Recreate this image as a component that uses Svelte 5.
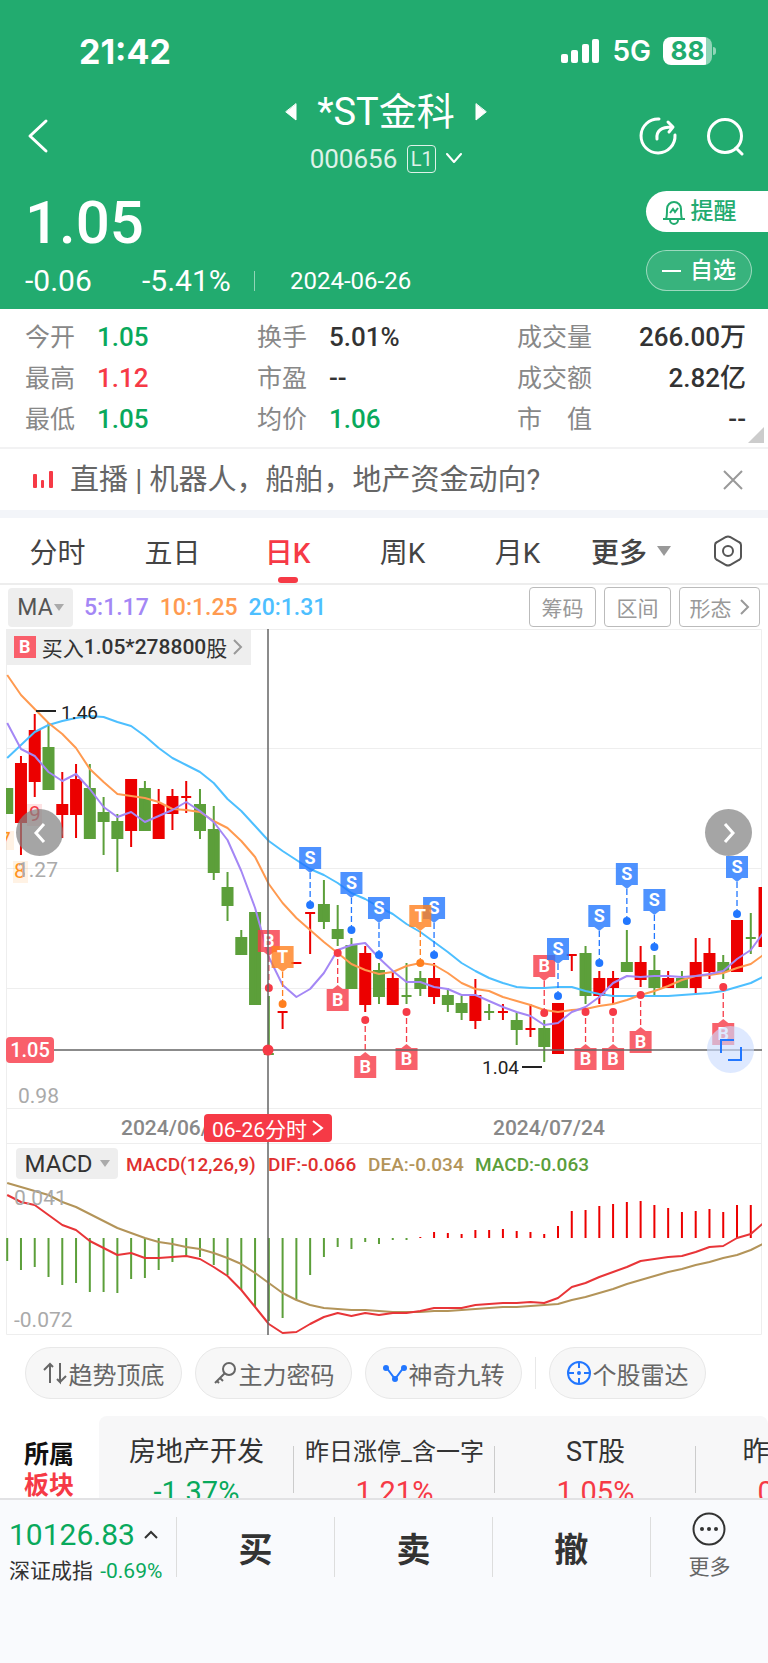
<script>
  // Header quote
  const stats = [
    [
      { label: '今开', value: '1.05', tone: 'down' },
      { label: '最高', value: '1.12', tone: 'up' },
      { label: '最低', value: '1.05', tone: 'down' }
    ],
    [
      { label: '换手', value: '5.01%', tone: '' },
      { label: '市盈', value: '--', tone: '' },
      { label: '均价', value: '1.06', tone: 'down' }
    ],
    [
      { label: '成交量', value: '266.00万', tone: '' },
      { label: '成交额', value: '2.82亿', tone: '' },
      { label: '市　值', value: '--', tone: '' }
    ]
  ]

  const tabs = ['分时', '五日', '日K', '周K', '月K']
  let activeTab = $state('日K')
  let showNews = $state(true)

  const sectors = [
    { name: '房地产开发', value: '-1.37%', tone: 'down' },
    { name: '昨日涨停_含一字', value: '1.21%', tone: 'up', small: true },
    { name: 'ST股', value: '1.05%', tone: 'up' },
    { name: '昨日涨停', value: '0.98%', tone: 'up' }
  ]

  // Chart: one slot per trading day
  const x = (i) => 7.2 + 13.77 * i
  const line = (ys) => ys.map((y, i) => `${x(i).toFixed(1)},${y}`).join(' ')

  // [colour, body top, body bottom, wick top, wick bottom]
  const candles = [
    ['g', 788, 814, 788, 814], ['r', 763, 823, 756, 855], ['r', 730, 782, 714, 797], ['g', 747, 790, 723, 790],
    ['r', 804, 815, 772, 838], ['r', 779, 815, 764, 838], ['g', 788, 839, 764, 839], ['g', 812, 822, 797, 855],
    ['g', 821, 839, 814, 872], ['r', 779, 831, 779, 847], ['g', 788, 831, 781, 831], ['r', 804, 839, 789, 839],
    ['r', 796, 814, 789, 830], ['r', 796, 798, 781, 813], ['g', 804, 831, 789, 839], ['g', 829, 873, 806, 880],
    ['g', 887, 906, 872, 921], ['g', 937, 955, 930, 955], ['g', 912, 1005, 912, 1005], ['g', 1053, 1055, 996, 1055],
    ['r', 1011, 1013, 1011, 1029], ['r', 962, 964, 962, 964], ['r', 912, 914, 912, 954], ['g', 904, 922, 880, 929],
    ['g', 929, 939, 905, 946], ['g', 945, 989, 938, 989], ['r', 953, 1005, 946, 1012], ['g', 970, 997, 963, 1004],
    ['r', 978, 1005, 972, 1005], ['g', 995, 997, 963, 1004], ['g', 978, 989, 971, 996], ['r', 978, 997, 963, 1004],
    ['g', 995, 1005, 988, 1012], ['g', 1003, 1013, 996, 1020], ['r', 995, 1021, 979, 1029], ['g', 1011, 1013, 1004, 1020],
    ['r', 1011, 1013, 1004, 1020], ['g', 1020, 1030, 1012, 1045], ['r', 1028, 1030, 1004, 1037], ['g', 1028, 1047, 1020, 1062],
    ['r', 1003, 1054, 1003, 1054], ['r', 954, 956, 954, 971], ['g', 953, 996, 946, 1004], ['r', 978, 996, 971, 1004],
    ['r', 978, 988, 971, 1004], ['g', 962, 972, 930, 972], ['r', 962, 980, 946, 987], ['g', 970, 988, 955, 995],
    ['r', 978, 988, 971, 988], ['g', 978, 988, 971, 988], ['r', 962, 988, 938, 995], ['r', 953, 972, 938, 979],
    ['g', 962, 972, 955, 979], ['r', 920, 972, 920, 972], ['g', 937, 939, 913, 954], ['r', 887, 947, 887, 947]
  ]

  const ma5 = [
    723, 749, 756, 772, 781, 774, 789, 807, 817, 812, 822, 816, 810, 802, 811, 822, 840, 871, 908, 957,
    985, 997, 989, 973, 950, 945, 943, 958, 971, 982, 982, 987, 989, 995, 995, 1001, 1007, 1012, 1016, 1025,
    1023, 1012, 1007, 997, 983, 976, 977, 976, 976, 977, 976, 974, 971, 959, 950, 931
  ]
  const ma10 = [
    675, 695, 709, 723, 734, 748, 769, 782, 794, 796, 798, 802, 809, 810, 812, 821, 828, 841, 857, 884,
    903, 918, 930, 942, 953, 964, 970, 974, 972, 966, 963, 965, 973, 983, 989, 991, 997, 1001, 1005, 1010,
    1012, 1010, 1009, 1006, 1004, 1000, 995, 991, 986, 980, 976, 975, 973, 968, 964, 954
  ]
  const ma20 = [
    758, 745, 732, 725, 721, 718, 716, 717, 722, 726, 736, 748, 758, 765, 772, 783, 799, 811, 826, 841,
    851, 860, 869, 875, 883, 893, 899, 907, 914, 924, 932, 942, 952, 963, 971, 978, 983, 987, 988, 988,
    987, 987, 991, 994, 996, 996, 996, 996, 996, 995, 994, 993, 991, 987, 983, 976
  ]

  // MACD panel
  const zero = 1238
  const bars = [
    1261, 1270, 1267, 1277, 1285, 1283, 1292, 1292, 1293, 1279, 1278, 1270, 1262, 1256, 1257, 1265, 1275, 1290, 1307, 1321,
    1318, 1300, 1275, 1257, 1247, 1249, 1242, 1244, 1240, 1240, 1237, 1232, 1233, 1234, 1230, 1230, 1229, 1231, 1232, 1234,
    1226, 1211, 1210, 1206, 1204, 1202, 1201, 1205, 1208, 1212, 1211, 1209, 1212, 1205, 1205
  ]
  const dif = [
    1195, 1202, 1205, 1215, 1225, 1230, 1241, 1248, 1255, 1253, 1258, 1258, 1257, 1256, 1259, 1267, 1276, 1290, 1307, 1324,
    1333, 1332, 1324, 1317, 1313, 1316, 1313, 1315, 1313, 1313, 1311, 1308, 1308, 1308, 1305, 1304, 1303, 1303, 1302, 1303,
    1298, 1287, 1283, 1277, 1272, 1267, 1261, 1259, 1257, 1256, 1252, 1247, 1246, 1238, 1234, 1222
  ]
  const dea = [
    1183, 1187, 1191, 1195, 1202, 1207, 1214, 1221, 1228, 1233, 1238, 1242, 1244, 1247, 1249, 1253, 1258, 1264, 1273, 1283,
    1293, 1300, 1305, 1308, 1309, 1310, 1310, 1311, 1312, 1312, 1312, 1311, 1311, 1310, 1309, 1308, 1307, 1307, 1306, 1305,
    1304, 1300, 1297, 1293, 1289, 1284, 1280, 1276, 1272, 1269, 1265, 1262, 1258, 1255, 1250, 1243
  ]

  // Trade marks: day, letter, dot position, whether the flag hangs below the dot
  const marks = [
    { day: 19, type: 'B', dot: 988 }, { day: 20, type: 'T', dot: 1004 }, { day: 22, type: 'S', dot: 905 },
    { day: 24, type: 'B', dot: 953, below: true }, { day: 25, type: 'S', dot: 930 },
    { day: 26, type: 'B', dot: 1020, below: true }, { day: 27, type: 'S', dot: 955 },
    { day: 29, type: 'B', dot: 1012, below: true }, { day: 31, type: 'S', dot: 955 }, { day: 30, type: 'T', dot: 963 },
    { day: 39, type: 'B', dot: 1013 }, { day: 40, type: 'S', dot: 996 },
    { day: 42, type: 'B', dot: 1012, below: true }, { day: 43, type: 'S', dot: 963 },
    { day: 44, type: 'B', dot: 1012, below: true }, { day: 45, type: 'S', dot: 921 },
    { day: 46, type: 'B', dot: 995, below: true }, { day: 47, type: 'S', dot: 947 },
    { day: 52, type: 'B', dot: 987, below: true }, { day: 53, type: 'S', dot: 914 }
  ]
</script>

<div class="app">
  <header class="header">
    <div class="status">
      <span class="clock">21:42</span>
      <span class="signal">
        <svg width="40" height="26" viewBox="0 0 40 26" fill="#fff">
          <rect x="1" y="16" width="7" height="9" rx="2" />
          <rect x="11" y="12" width="7" height="13" rx="2" />
          <rect x="22" y="6" width="7" height="19" rx="2" />
          <rect x="32" y="1" width="7" height="24" rx="2" />
        </svg>
        <span class="net">5G</span>
        <span class="battery">88</span>
      </span>
    </div>

    <div class="nav">
      <button class="icon-btn back" aria-label="返回">
        <svg width="22" height="36" viewBox="0 0 22 36"><path d="M19 3L3 18l16 15" /></svg>
      </button>
      <div class="title-block">
        <div class="title">
          <button class="icon-btn" aria-label="上一只"><svg width="12" height="18" viewBox="0 0 12 18"><path class="solid" d="M11 1v16L1 9z" /></svg></button>
          <h1>*ST金科</h1>
          <button class="icon-btn" aria-label="下一只"><svg width="12" height="18" viewBox="0 0 12 18"><path class="solid" d="M1 1v16l10-8z" /></svg></button>
        </div>
        <div class="code">
          <span>000656</span>
          <span class="level">L1</span>
          <svg width="16" height="12" viewBox="0 0 16 12"><path class="thin" d="M1 1l7 8 7-8" /></svg>
        </div>
      </div>
      <div class="actions">
        <button class="icon-btn" aria-label="分享">
          <svg width="40" height="40" viewBox="0 0 40 40">
            <path d="M21 3A17 17 0 1 0 37 19" />
            <path d="M19 23C18 15 23 11 34 11M30 6l5 5-4 5" />
          </svg>
        </button>
        <button class="icon-btn" aria-label="搜索">
          <svg width="40" height="40" viewBox="0 0 40 40"><circle cx="20" cy="20" r="16.5" /><path d="M31 32l6 6" /></svg>
        </button>
      </div>
    </div>

    <div class="quote">
      <div>
        <div class="price">1.05</div>
        <div class="change">
          <span class="diff">-0.06</span>
          <span class="pct">-5.41%</span>
          <span class="date">2024-06-26</span>
        </div>
      </div>
      <div class="quote-btns">
        <button class="alert">
          <svg width="24" height="26" viewBox="0 0 24 26">
            <path d="M1 20h22M4 20c1-2 1-5 1-10a7 7 0 0 1 14 0c0 5 0 8 1 10M8 21a4 4 0 0 0 8 0M8 14l3-4 2 3 3-4" />
          </svg>
          提醒
        </button>
        <button class="watch"><i></i>自选</button>
      </div>
    </div>
  </header>

  <section class="stats">
    {#each stats as col}
      <dl>
        {#each col as s}
          <div class="stat"><dt>{s.label}</dt><dd class={s.tone}>{s.value}</dd></div>
        {/each}
      </dl>
    {/each}
    <i class="corner"></i>
  </section>

  {#if showNews}
    <section class="news">
      <svg width="22" height="20" viewBox="0 0 22 20" fill="#f63a46">
        <rect x="1" y="4" width="4" height="14" rx="1" /><rect x="9" y="10" width="3" height="8" rx="1" /><rect x="17" y="1" width="4" height="17" rx="1" />
      </svg>
      <a href="#live">直播 | 机器人，船舶，地产资金动向?</a>
      <button class="icon-btn" aria-label="关闭" onclick={() => (showNews = false)}>
        <svg width="20" height="20" viewBox="0 0 20 20"><path class="gray" d="M1 1l18 18M19 1L1 19" /></svg>
      </button>
    </section>
  {/if}

  <nav class="tabs">
    {#each tabs as t}
      <button class="tab" class:active={t === activeTab} onclick={() => (activeTab = t)}>{t}</button>
    {/each}
    <button class="tab more-tab">更多<i class="caret"></i></button>
    <button class="icon-btn settings" aria-label="设置">
      <svg width="32" height="34" viewBox="0 0 32 34">
        <path class="dark" d="M14 3q2-1 4 0l9 5q2 1 2 3v12q0 2-2 3l-9 5q-2 1-4 0l-9-5q-2-1-2-3V11q0-2 2-3z" />
        <circle class="dark" cx="16" cy="17" r="5" />
      </svg>
    </button>
  </nav>

  <div class="ma-row">
    <button class="pick">MA<i class="caret"></i></button>
    <span class="ma5">5:1.17</span>
    <span class="ma10">10:1.25</span>
    <span class="ma20">20:1.31</span>
    <div class="tools">
      <button>筹码</button>
      <button>区间</button>
      <button>形态<svg width="10" height="18" viewBox="0 0 10 18"><path class="gray" d="M1 2l7 7-7 7" /></svg></button>
    </div>
  </div>

  <section class="chart">
    <svg class="plot" viewBox="0 629 768 707">
      <clipPath id="plot-area"><rect x="6" y="629" width="756" height="707" /></clipPath>

      <g class="grid">
        <path d="M6 748.5h756M6 868.5h756M6 988.5h756M6 1108.5h756M6 1143.5h756" />
        <path d="M6.5 629.5h755v705h-755z" />
      </g>

      <g clip-path="url(#plot-area)">
        {#each candles as [color, top, bottom, high, low], i}
          <g class={color}>
            <rect x={x(i) - (bottom - top > 2 ? 6 : 5)} y={top} width={bottom - top > 2 ? 12 : 10} height={bottom - top} />
            <rect x={x(i) - 1} y={high} width="2" height={low - high} />
          </g>
        {/each}
        {#each bars as y, i}
          <rect class={y > zero ? 'g' : 'r'} x={x(i) - 1} y={Math.min(y, zero)} width="2" height={Math.abs(y - zero)} />
        {/each}
        <g class="lines">
          <polyline points={line(ma20)} stroke="#4dbfff" />
          <polyline points={line(ma10)} stroke="#ff9a50" />
          <polyline points={line(ma5)} stroke="#a487f5" />
          <polyline points={line(dea)} stroke="#b39459" />
          <polyline points={line(dif)} stroke="#e83538" />
        </g>

        <!-- nine-turn counters -->
        <g class="nine">
          <rect x="27" y="804" width="15" height="22" fill="#f63a4626" />
          <rect x="0" y="831" width="14" height="19" fill="#ff931e1f" />
          <rect x="13" y="861" width="15" height="22" fill="#ff931e1f" />
          <text x="29" y="821" fill="#f63a46">9</text>
          <text x="-1" y="847" fill="#ff931e">7</text>
          <text x="14" y="878" fill="#ff931e">8</text>
        </g>
      </g>

      <g class="axis">
        <text x="17" y="877">1.27</text>
        <text x="18" y="1103">0.98</text>
        <text x="14" y="1205">0.041</text>
        <text x="14" y="1327">-0.072</text>
      </g>
      <g class="dates">
        <text x="121" y="1135">2024/06/26</text>
        <text x="493" y="1135">2024/07/24</text>
      </g>
      <g class="extreme">
        <path d="M36 711h20M522 1067h20" />
        <text x="61" y="719">1.46</text>
        <text x="482" y="1074">1.04</text>
      </g>

      <g class="legend">
        <text x="126" y="1171" fill="#e0302f">MACD(12,26,9)</text>
        <text x="268" y="1171" fill="#e0302f">DIF:-0.066</text>
        <text x="368" y="1171" fill="#b39459">DEA:-0.034</text>
        <text x="475" y="1171" fill="#5a9e3a">MACD:-0.063</text>
      </g>

      {#each marks as m}
        {@const top = m.below ? m.dot + 36 : m.dot - 58}
        <g class="mark {m.type}">
          <line x1={x(m.day)} x2={x(m.day)} y1={m.below ? m.dot + 6 : top + 26} y2={m.below ? top - 3 : m.dot - 4} />
          <circle cx={x(m.day)} cy={m.dot} r="4" />
          <rect x={x(m.day) - 11} y={top} width="22" height="22" />
          {#if m.below}
            <path d="M{x(m.day) - 5} {top}l5-4 5 4z" />
          {:else}
            <path d="M{x(m.day) - 5} {top + 22}l5 4 5-4z" />
          {/if}
          <text x={x(m.day)} y={top + 17}>{m.type}</text>
        </g>
      {/each}

      <path class="cross" d="M268 629v706M6 1050h756" />
      <circle cx="268" cy="1050" r="5.5" fill="#f63a46" />
    </svg>

    <button class="trade"><b>B</b>买入<span>1.05*278800</span>股<svg width="10" height="18" viewBox="0 0 10 18"><path class="gray" d="M1 2l7 7-7 7" /></svg></button>
    <button class="round prev" aria-label="向左"><svg width="14" height="22" viewBox="0 0 14 22"><path d="M11 2L3 11l8 9" /></svg></button>
    <button class="round next" aria-label="向右"><svg width="14" height="22" viewBox="0 0 14 22"><path d="M3 2l8 9-8 9" /></svg></button>
    <button class="round expand" aria-label="全屏"><svg width="24" height="24" viewBox="0 0 24 24"><path d="M2 15V2h13M22 9v13H9" /></svg></button>
    <span class="price-tag">1.05</span>
    <button class="day-tag">06-26分时<svg width="12" height="18" viewBox="0 0 12 18"><path d="M1 2l9 7-9 7" /></svg></button>
    <button class="pick macd">MACD<i class="caret"></i></button>
  </section>

  <div class="pills">
    <button class="pill">
      <svg width="24" height="24" viewBox="0 0 24 24"><path d="M7 22V3M1 9l6-6 3 3M17 2v19l-3-3M17 21l6-6" /></svg>趋势顶底
    </button>
    <button class="pill">
      <svg width="24" height="24" viewBox="0 0 24 24"><circle cx="16" cy="8" r="6" /><path d="M12 12L2 22M7 17l3 3M4 20l2 2" /></svg>主力密码
    </button>
    <button class="pill blue">
      <svg width="24" height="24" viewBox="0 0 24 24"><path d="M3 6l9 12 9-12" /><circle class="fill" cx="3" cy="7" r="3" /><circle class="fill" cx="21" cy="7" r="3" /><circle class="fill" cx="12" cy="18" r="3" /></svg>神奇九转
    </button>
    <i class="bar"></i>
    <button class="pill blue">
      <svg width="24" height="24" viewBox="0 0 24 24"><circle cx="12" cy="12" r="11" /><path d="M12 1v6M12 17v6M1 12h6M17 12h6" /><circle class="fill" cx="12" cy="12" r="2" /></svg>个股雷达
    </button>
  </div>

  <section class="sectors">
    <h2>所属<em>板块</em></h2>
    <div class="sector-list">
      {#each sectors as s}
        <a class="sector" href="#sector">
          <span class="name" class:small={s.small}>{s.name}</span>
          <span class="value {s.tone}">{s.value}</span>
        </a>
      {/each}
    </div>
  </section>

  <footer class="footer">
    <button class="index">
      <span class="points">10126.83<svg width="16" height="10" viewBox="0 0 16 10"><path d="M2 8l6-6 6 6" /></svg></span>
      <span class="index-name">深证成指 <span class="down">-0.69%</span></span>
    </button>
    <button class="order">买</button>
    <button class="order">卖</button>
    <button class="order">撤</button>
    <button class="more">
      <svg width="34" height="34" viewBox="0 0 34 34">
        <circle cx="17" cy="17" r="15.5" />
        <circle class="dot" cx="10" cy="17" r="2" /><circle class="dot" cx="17" cy="17" r="2" /><circle class="dot" cx="24" cy="17" r="2" />
      </svg>
      更多
    </button>
  </footer>
</div>

<style>
  :global(body) { margin: 0; background: #f9fafd; }

  .app {
    font-family: Roboto, "Noto Sans CJK SC", sans-serif;
    color: #333;
    background: #fff;
    overflow: hidden;
  }
  button {
    font: inherit; color: inherit; background: none; border: none; padding: 0; cursor: pointer;
    display: flex; align-items: center; justify-content: center; box-sizing: border-box; white-space: nowrap;
  }
  a { color: inherit; text-decoration: none; }
  svg { display: block; flex: none; }
  .up { color: #f63a46; }
  .down { color: #09a95c; }
  .caret { border: 7px solid transparent; border-top: 10px solid #999; border-bottom: 0; }
  .gray { fill: none; stroke: #999; stroke-width: 2; }
  .dark { fill: none; stroke: #555; stroke-width: 2; }

  /* header */
  .header { background: #22ab6f; color: #fff; }
  .header .icon-btn path, .header .icon-btn circle, .code path { fill: none; stroke: #fff; stroke-width: 3; stroke-linecap: round; stroke-linejoin: round; }
  .header .icon-btn .solid { fill: #fff; stroke-width: 1; }
  .header .code .thin { stroke-width: 2; }

  .status {
    display: flex; align-items: center; justify-content: space-between;
    height: 70px; padding: 16px 52px 0 79px;
    font-family: Inter, sans-serif;
  }
  .clock { font-size: 34px; font-weight: 700; }
  .signal { display: flex; align-items: center; gap: 12px; }
  .net { font-size: 28px; font-weight: 600; }
  .battery {
    position: relative; width: 49px; height: 28px; line-height: 28px; border-radius: 8px; text-align: center;
    font-size: 26px; font-weight: 700; color: #22ab6f;
    background: linear-gradient(90deg, #fff 88%, #90d5b7 88%);
    margin-right: 4px;
  }
  .battery::after { content: ''; position: absolute; right: -4px; top: 10px; width: 3px; height: 8px; border-radius: 0 3px 3px 0; background: #90d5b7; }

  .nav { display: grid; grid-template-columns: 1fr auto 1fr; height: 100px; padding: 0 23px 0 27px; }
  .back { justify-self: start; }
  .title { display: flex; align-items: center; justify-content: center; gap: 20px; height: 52px; }
  h1 { margin: 0; font-size: 38px; font-weight: 400; line-height: 52px; }
  .code { display: flex; align-items: center; justify-content: center; gap: 10px; font-size: 26px; line-height: 42px; }
  .code span { opacity: 0.85; }
  .level { box-sizing: border-box; width: 29px; height: 28px; border: 1px solid #fff; border-radius: 4px; font-size: 20px; line-height: 26px; text-align: center; }
  .actions { display: flex; justify-content: flex-end; align-items: center; gap: 27px; }

  .quote { display: flex; justify-content: space-between; height: 123px; padding-left: 25px; }
  .price { font-size: 60px; font-weight: 500; line-height: 74px; }
  .change { display: flex; align-items: center; font-size: 30px; line-height: 42px; }
  .diff { width: 117px; }
  .pct { width: 112px; }
  .date { font-size: 24px; border-left: 1px solid #ffffff80; line-height: 20px; padding-left: 35px; }
  .quote-btns { display: flex; flex-direction: column; gap: 18px; padding-top: 5px; width: 122px; font-size: 23px; line-height: 36px; }
  .quote-btns button { height: 41px; }
  .alert { background: #fff; color: #22ab6f; border-radius: 21px 0 0 21px; gap: 5px; padding-right: 16px; font-weight: 500; }
  .alert path { fill: none; stroke: #22ab6f; stroke-width: 2; }
  .watch { width: 106px; border: 1px solid #ffffff80; background: #ffffff1a; border-radius: 21px; gap: 9px; font-weight: 500; }
  .watch i { width: 19px; height: 2px; background: #fff; }

  /* stats */
  .stats { position: relative; display: flex; justify-content: space-between; padding: 8px 22px 7px 25px; border-bottom: 2px solid #f2f2f3; }
  dl { margin: 0; }
  dl:nth-child(1) { width: 232px; }
  dl:nth-child(2) { width: 260px; }
  dl:nth-child(3) { flex: 1; }
  .stat { display: flex; gap: 22px; height: 41px; align-items: center; font-size: 25px; line-height: 41px; }
  dt { color: #888; }
  dd { margin: 0; font-size: 26px; font-weight: 500; }
  dl:nth-child(3) dd { margin-left: auto; }
  .corner { position: absolute; right: 4px; bottom: 4px; border: 8px solid #ccc; border-top-color: transparent; border-left-color: transparent; }

  /* news */
  .news { display: flex; align-items: center; padding: 0 25px 0 32px; height: 61px; border-bottom: 8px solid #f3f5f9; }
  .news a { flex: 1; padding-left: 16px; font-size: 29px; line-height: 40px; color: #666; }

  /* tabs */
  .tabs { display: flex; align-items: center; height: 65px; padding-right: 24px; border-bottom: 2px solid #ededed; font-size: 28px; }
  .tab { position: relative; flex: 115; height: 65px; color: #444; }
  .tab.active { color: #f63a46; font-weight: 500; }
  .tab.active::after { content: ''; position: absolute; bottom: 0; left: 50%; margin-left: -10px; width: 20px; height: 6px; border-radius: 3px; background: #f63a46; }
  .tab.more-tab { flex: 112; gap: 10px; font-weight: 500; }
  .settings { margin-left: 25px; }

  /* indicator row */
  .ma-row { display: flex; align-items: center; height: 44px; padding: 0 8px; gap: 11px; font-size: 23px; font-weight: 500; }
  .pick { background: #eee; border-radius: 4px; color: #555; font-weight: 400; }
  .ma-row .pick { width: 65px; height: 39px; gap: 1px; }
  .pick .caret { border-width: 5px; border-top: 7px solid #aaa; border-bottom: 0; }
  .ma5 { color: #a487f5; }
  .ma10 { color: #ff9a50; }
  .ma20 { color: #4dbfff; }
  .tools { display: flex; gap: 8px; margin-left: auto; color: #999; font-size: 21px; font-weight: 400; }
  .tools button { width: 67px; height: 40px; border: 1px solid #bbb; border-radius: 4px; }
  .tools button:last-child { width: 81px; gap: 8px; }

  /* chart */
  .chart { position: relative; }
  .plot { width: 100%; height: auto; }
  .grid path { fill: none; stroke: #eee; stroke-width: 1; }
  .r { fill: #ec0000; }
  .g { fill: #5c9f3a; }
  .lines polyline { fill: none; stroke-width: 2; stroke-linejoin: round; }
  .axis text { fill: #aaa; font-size: 21px; }
  .dates text { fill: #888; font-size: 21px; font-weight: 500; }
  .nine text { font-size: 21px; }
  .extreme text { fill: #222; font-size: 19px; }
  .extreme path { stroke: #222; stroke-width: 2; }
  .legend text { font-size: 19px; font-weight: 500; }
  .cross { fill: none; stroke: #666; stroke-width: 1.5; }
  .mark line { stroke-width: 1.3; stroke-dasharray: 6 3; }
  .mark rect, .mark path { fill-opacity: 0.8; }
  .mark text { fill: #fff; font-size: 18px; font-weight: 700; text-anchor: middle; }
  .mark.B { fill: #f63a46; }
  .mark.B line { stroke: #f63a46; }
  .mark.S { fill: #2277ff; }
  .mark.S line { stroke: #2277ff; }
  .mark.T { fill: #ff7f1e; }
  .mark.T line { stroke: #ff7f1e; }

  .trade { position: absolute; left: 6px; top: 0; height: 36px; width: 245px; background: #eeeeee; font-size: 21px; }
  .trade span { font-weight: 500; }
  .trade b { width: 22px; height: 22px; line-height: 22px; margin-right: 6px; background: #f95f6b; color: #fff; font-size: 18px; }
  .trade svg { margin-left: 6px; }
  .round { position: absolute; width: 47px; height: 47px; border-radius: 50%; background: #828282b8; }
  .round path { fill: none; stroke: #fff; stroke-width: 3; }
  .prev { left: 16px; top: 180px; }
  .next { right: 16px; top: 180px; }
  .expand { right: 14px; top: 397px; background: #cbdcffa0; }
  .expand path { stroke: #2277ff; stroke-width: 2; }
  .price-tag { position: absolute; left: 6px; top: 408px; width: 48px; height: 26px; line-height: 26px; border-radius: 4px; background: #f95f6b; color: #fff; text-align: center; font-size: 20px; font-weight: 500; }
  .day-tag { position: absolute; left: 204px; top: 485px; width: 128px; height: 28px; border-radius: 4px; background: #f63a46; color: #fff; font-size: 21px; gap: 5px; }
  .day-tag path { fill: none; stroke: #fff; stroke-width: 2; }
  .macd { position: absolute; left: 16px; top: 519px; width: 102px; height: 31px; gap: 7px; font-size: 24px; color: #333; }

  /* pills */
  .pills { display: flex; align-items: center; gap: 13px; padding: 11px 25px 17px; font-size: 24px; color: #666; }
  .pill { width: 157px; height: 52px; border: 1px solid #e8e8e8; border-radius: 26px; background: #f7f7f7; gap: 2px; }
  .pill svg { fill: none; stroke: #666; stroke-width: 2; }
  .pill.blue svg { stroke: #2277ff; }
  .pill .fill { fill: #2277ff; stroke: none; }
  .bar { width: 1px; height: 32px; background: #e8e8e8; }

  /* sectors */
  .sectors { display: flex; height: 82px; overflow: hidden; }
  h2 { flex: none; width: 99px; box-sizing: border-box; padding: 23px 0 0 24px; margin: 0; font-size: 25px; font-weight: 700; line-height: 31px; color: #111; }
  h2 em { display: block; font-style: normal; color: #f63a46; }
  .sector-list { flex: 1; display: flex; overflow: hidden; background: #f7f7f8; border-radius: 8px 8px 0 0; }
  .sector { position: relative; flex: none; width: 201px; padding-top: 16px; display: flex; flex-direction: column; align-items: center; }
  .sector:first-child { width: 195px; }
  .sector::after { content: ''; position: absolute; right: 0; top: 30px; height: 47px; width: 1px; background: #ccc; }
  .name { font-size: 27px; line-height: 40px; }
  .name.small { font-size: 24px; }
  .value { font-size: 29px; line-height: 41px; }

  /* footer */
  .footer { display: flex; align-items: flex-start; padding: 17px 0 86px; border-top: 2px solid #e2e2e4; background: #f9fafd; }
  .footer button { height: 60px; }
  .footer .index { flex: 0 0 176px; height: 72px; flex-direction: column; align-items: flex-start; justify-content: flex-end; padding-left: 9px; }
  .points { display: flex; align-items: center; gap: 8px; font-size: 30px; line-height: 36px; color: #09a95c; }
  .points path { fill: none; stroke: #333; stroke-width: 2; }
  .index-name { font-size: 21px; line-height: 36px; }
  .index-name .down { margin-left: 2px; }
  .order { flex: 158; border-left: 1px solid #ddd; font-size: 34px; font-weight: 700; }
  .more { flex: 118; border-left: 1px solid #ddd; flex-direction: column; gap: 6px; font-size: 21px; color: #666; line-height: 30px; }
  .more svg { fill: none; stroke: #333; stroke-width: 2; }
  .more .dot { fill: #333; stroke: none; }
</style>
